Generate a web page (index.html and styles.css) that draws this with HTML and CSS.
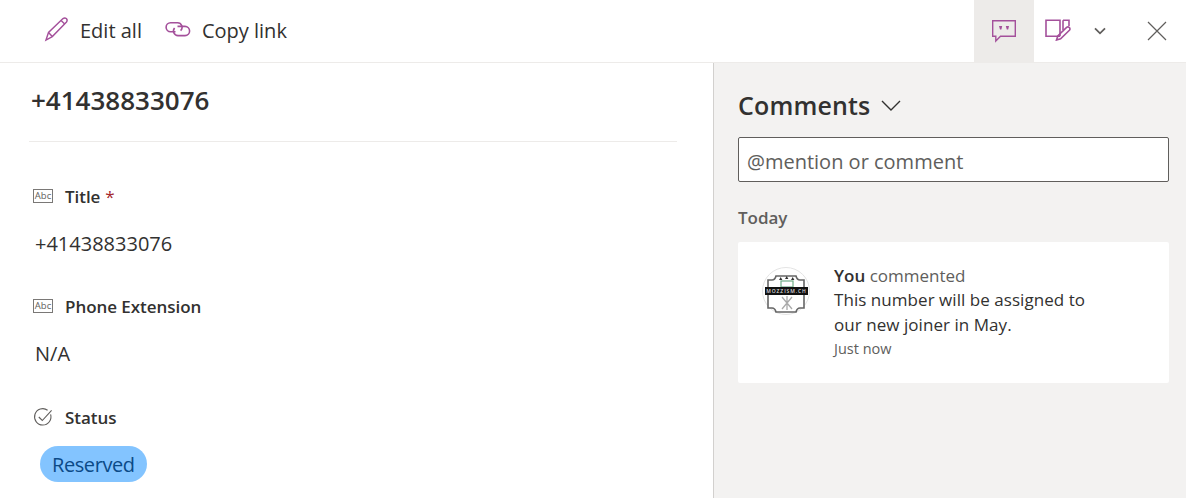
FILE: index.html
```html
<!DOCTYPE html>
<html lang="en">
<head>
<meta charset="utf-8">
<title>Item details</title>
<link rel="stylesheet" href="styles.css">
</head>
<body>
<header class="topbar">
  <div class="actions">
    <button class="action edit">
      <svg width="27" height="26" viewBox="0 0 26 26" fill="none" stroke="#a4509b" stroke-width="1.4"><path d="M2.5 24 L5 16.5 L19.5 2.6 Q21.3 1.2 22.8 2.6 Q24.4 4.2 23 6 L8.8 20.6 Z"/><path d="M5 16.5 L8.8 20.6"/><path d="M17.6 4.6 L21.2 8"/></svg>
      <span>Edit all</span>
    </button>
    <button class="action link">
      <svg width="26" height="18" viewBox="0 0 26 18" fill="none" stroke="#a4509b" stroke-width="1.6"><path d="M10.5 9.8 H5.6 A4.5 4.5 0 0 1 5.6 0.8 H12.5 A4.5 4.5 0 0 1 15.6 8.6"/><path d="M12.5 4.4 H20 A4.6 4.6 0 0 1 20 13.6 H13 A4.6 4.6 0 0 1 9.6 6"/></svg>
      <span>Copy link</span>
    </button>
  </div>
  <div class="tools">
    <div class="tool active">
      <svg width="26" height="24" viewBox="0 0 26 24" fill="none" stroke="#a4509b" stroke-width="1.4"><path d="M1.7 1.7 H24.3 V17.3 H9.5 L4.8 22 V17.3 H1.7 Z"/><path d="M8 7 H11.2 L10.4 10.5 H9 Z M14.8 7 H18 L17.2 10.5 H15.8 Z" fill="#a4509b" stroke="none"/></svg>
    </div>
    <div class="tool form">
      <svg class="form-icon" width="26" height="22" viewBox="0 0 26 22" fill="none" stroke="#a4509b" stroke-width="1.6"><path d="M15 17.2 H1 V1.2 H15 V17.2"/><path d="M18 1.2 H24 V7"/><path d="M18 1.2 V11"/><path d="M11.5 21 L12.8 17 L21.6 8.4 Q23 7.3 24.4 8.5 Q25.5 9.9 24.4 11.2 L15.6 19.8 Z"/></svg>
    </div>
    <div class="tool caret">
      <svg width="12" height="8" viewBox="0 0 12 8" fill="none" stroke="#605e5c" stroke-width="1.8"><path d="M1 1.3 L6 6.3 L11 1.3"/></svg>
    </div>
    <div class="tool close">
      <svg width="20" height="20" viewBox="0 0 20 20" fill="none" stroke="#605e5c" stroke-width="1.2"><path d="M1 1 L19 19 M19 1 L1 19"/></svg>
    </div>
  </div>
</header>
<div class="panes">
  <main class="form-pane">
    <h1 class="record-title">+41438833076</h1>
    <section class="field first">
      <div class="field-label">
        <svg class="abc" width="20" height="14" viewBox="0 0 20 14"><rect x="0.5" y="0.5" width="19" height="13" fill="none" stroke="#7a7876"/><text x="10" y="10" text-anchor="middle" class="abc-text">Abc</text></svg>
        <span>Title</span><span class="req">*</span>
      </div>
      <div class="field-value">+41438833076</div>
    </section>
    <section class="field">
      <div class="field-label">
        <svg class="abc" width="20" height="14" viewBox="0 0 20 14"><rect x="0.5" y="0.5" width="19" height="13" fill="none" stroke="#7a7876"/><text x="10" y="10" text-anchor="middle" class="abc-text">Abc</text></svg>
        <span>Phone Extension</span>
      </div>
      <div class="field-value">N/A</div>
    </section>
    <section class="field status">
      <div class="field-label">
        <svg class="abc" width="20" height="20" viewBox="0 0 20 20" fill="none" stroke="#605e5c" stroke-width="1.1"><path d="M17.6 7.4 A8.2 8.2 0 1 1 14.6 3.2"/><path d="M5.8 10 L9.3 13.5 L18.6 3.4"/></svg>
        <span>Status</span>
      </div>
      <span class="pill">Reserved</span>
    </section>
  </main>
  <aside class="comments">
    <h2 class="comments-head">
      <span>Comments</span>
      <svg width="20" height="11" viewBox="0 0 20 11" fill="none" stroke="#323130" stroke-width="1.4"><path d="M1 1 L10 10 L19 1"/></svg>
    </h2>
    <div class="comment-input">@mention or comment</div>
    <div class="day">Today</div>
    <article class="comment-card">
      <svg class="avatar" width="48" height="48" viewBox="0 0 48 48">
        <circle cx="24" cy="24" r="23.5" fill="#fff" stroke="#e4e4e4"/>
        <path d="M6 13 H10 Q13 13 14 9 H34 Q35 13 38 13 H42 V41 H38 Q35 41 34 45 H14 Q13 41 10 41 H6 Z" fill="#fff" stroke="#666" stroke-width="1.6"/>
        <rect x="19" y="14" width="12" height="6" fill="#fff" stroke="#6fae88" stroke-width="1.2"/>
        <path d="M17 13 L18.7 10 L20.4 13 Z M23 12 L24.7 9 L26.4 12 Z M29 13 L30.7 10 L32.4 13 Z" fill="#333"/>
        <rect x="3" y="20" width="43" height="8" fill="#111"/>
        <text x="24.5" y="26.2" text-anchor="middle" class="logo-text">MOZZISM.CH</text>
        <path d="M20 30 L30 42 M30 30 L20 42 M25 29 V43" stroke="#aaa" stroke-width="1.3" fill="none"/>
      </svg>
      <div class="comment-body">
        <div class="who"><strong>You</strong> commented</div>
        <p class="comment-text">This number will be assigned to<br>our new joiner in May.</p>
        <div class="when">Just now</div>
      </div>
    </article>
  </aside>
</div>
</body>
</html>
```
FILE: styles.css
```css
* { box-sizing: border-box; }
html, body { margin: 0; height: 100%; }
body {
  width: 1186px;
  height: 498px;
  overflow: hidden;
  background: #fff;
  color: #323130;
  font-family: "Open Sans", "Noto Sans", "Liberation Sans", sans-serif;
  display: flex;
  flex-direction: column;
}
.topbar {
  height: 63px;
  flex: none;
  display: flex;
  justify-content: space-between;
  border-bottom: 1px solid #edebe9;
}
.actions { display: flex; align-items: center; padding-left: 43px; gap: 23px; }
.action {
  display: flex;
  align-items: center;
  gap: 11px;
  border: 0;
  background: none;
  padding: 0;
  font: inherit;
  font-size: 20px;
  color: #323130;
}
.action span { margin-bottom: 2px; }
.action.edit { gap: 10px; }
.action.edit svg { margin-bottom: 4px; }
.tools { display: flex; align-items: stretch; }
.tool { display: flex; align-items: center; justify-content: center; }
.tool.active { width: 60px; background: #edebe9; }
.tool.form { width: 48px; }
.form-icon { margin-bottom: 2px; }
.tool.caret { width: 36px; }
.tool.close { width: 68px; padding-left: 10px; }
.panes { flex: 1; display: flex; min-height: 0; }
.form-pane {
  width: 714px;
  flex: none;
  border-right: 1px solid #d2d0ce;
  padding: 0 36px 0 29px;
}
.record-title {
  margin: 0;
  height: 79px;
  padding: 18px 0 0 2px;
  font-size: 26px;
  line-height: 38px;
  font-weight: 600;
  border-bottom: 1px solid #edebe9;
}
.field { height: 110px; padding: 0 0 0 4px; }
.field.first { margin-top: 39px; }
.field-label {
  display: flex;
  align-items: center;
  height: 32px;
  padding-bottom: 2px;
  font-size: 17px;
  font-weight: 600;
  letter-spacing: -0.05px;
}
.status .field-label { padding-bottom: 0; }
.abc { width: 20px; margin-right: 12px; flex: none; }
.abc-text { font-size: 9.5px; fill: #605e5c; letter-spacing: 0; font-weight: 400; }
.req { color: #a4262c; margin-left: 5px; font-weight: 400; }
.field-value {
  margin-top: 18px;
  padding-left: 2px;
  font-size: 20px;
  line-height: 26px;
}
.pill {
  display: inline-block;
  margin: 13px 0 0 7px;
  height: 36px;
  line-height: 37px;
  padding: 0 12px;
  border-radius: 18px;
  background: #83c4ff;
  color: #0b4a87;
  font-size: 20px;
  letter-spacing: -0.42px;
}
.comments {
  flex: 1;
  background: #f3f2f1;
  padding: 0 17px 0 24px;
}
.comments-head {
  margin: 0;
  padding-top: 10px;
  height: 74px;
  display: flex;
  align-items: center;
  gap: 11px;
  font-size: 25px;
  font-weight: 600;
  letter-spacing: 0.15px;
}
.comment-input {
  height: 45px;
  background: #fff;
  border: 1px solid #605e5c;
  border-radius: 2px;
  padding: 0 8px;
  line-height: 47px;
  font-size: 20px;
  color: #605e5c;
}
.day {
  margin-top: 24px;
  height: 36px;
  font-size: 17px;
  line-height: 24px;
  font-weight: 600;
  letter-spacing: -0.05px;
  color: #605e5c;
}
.comment-card {
  height: 141px;
  background: #fff;
  border-radius: 2px;
  padding: 23px 24px 0 24px;
  display: flex;
  gap: 24px;
}
.avatar { flex: none; margin-top: 2px; }
.logo-text { font-size: 5px; fill: #ddd; letter-spacing: 0.9px; font-weight: 600; }
.comment-body { width: 290px; font-size: 17px; line-height: 24px; letter-spacing: 0.05px; }
.who { height: 22px; line-height: 22px; color: #605e5c; letter-spacing: 0; }
.who strong { color: #323130; font-weight: 600; }
.comment-text { margin: 0; line-height: 25px; }
.when { font-size: 14.5px; line-height: 23px; color: #605e5c; letter-spacing: 0; }
```
